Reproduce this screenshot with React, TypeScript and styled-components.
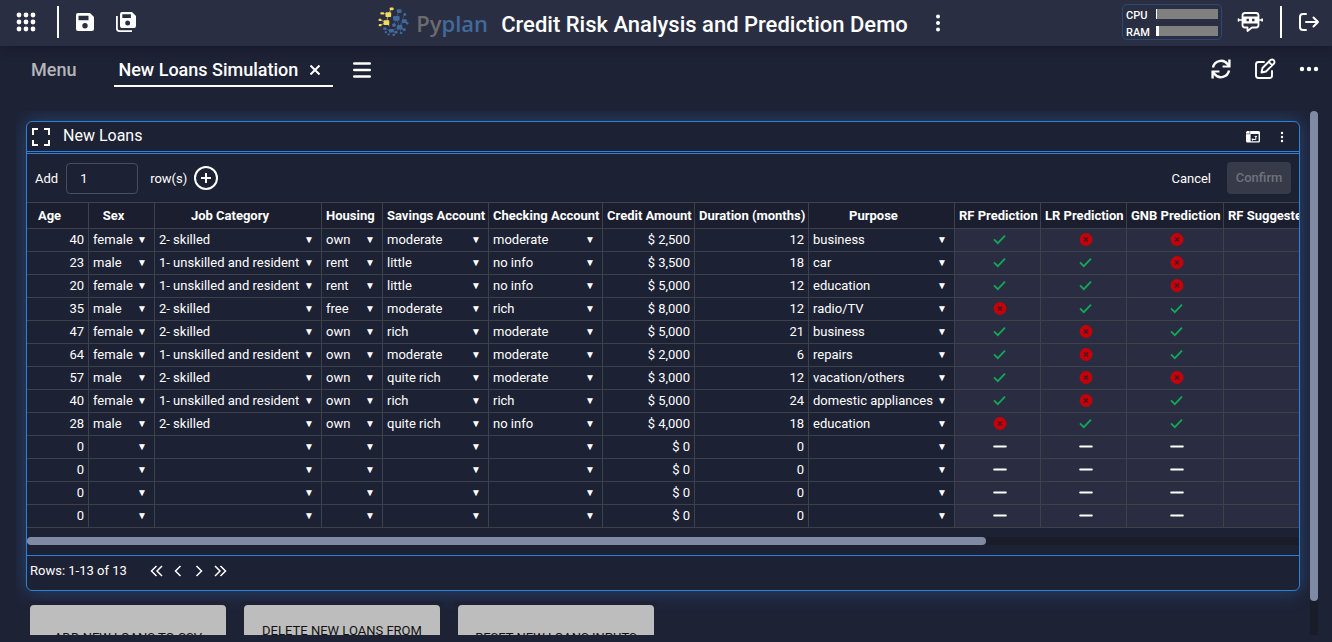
import React from "react";
import styled, { createGlobalStyle } from "styled-components";

const GlobalStyle = createGlobalStyle`
  *, *::before, *::after { box-sizing: border-box; }
  body {
    margin: 0;
    background: #1e2235;
    color: #fff;
    font-family: Roboto, "Liberation Sans", sans-serif;
    font-size: 13px;
  }
  button, input, select { font: inherit; color: inherit; }
`;

const Page = styled.div`
  display: flex;
  flex-direction: column;
  height: 100vh;
  overflow: hidden;
`;

const TopBar = styled.header`
  position: relative;
  display: grid;
  grid-template-columns: 1fr auto 1fr;
  align-items: center;
  height: 46px;
  flex: none;
  background: #2a2e42;
  box-shadow: 0 2px 12px rgba(15, 15, 25, 0.45);
`;

const BarGroup = styled.div<{ $end?: boolean }>`
  display: flex;
  align-items: center;
  align-self: start;
  height: 44px;
  padding: ${(p) => (p.$end ? "0 7px 0 0" : "0 0 0 10px")};
  justify-content: ${(p) => (p.$end ? "flex-end" : "flex-start")};
`;

const IconButton = styled.button<{ $w?: number; $h?: number }>`
  display: flex;
  align-items: center;
  justify-content: center;
  flex: none;
  width: ${(p) => p.$w ?? 32}px;
  height: ${(p) => p.$h ?? 32}px;
  padding: 0;
  border: 0;
  background: none;
  cursor: pointer;

  svg { display: block; }
`;

const Divider = styled.span<{ $gap: string }>`
  width: 2px;
  height: 32px;
  margin: ${(p) => p.$gap};
  background: #fff;
`;

const Brand = styled.div`
  display: flex;
  align-items: center;
`;

const Logo = styled.div`
  display: flex;
  align-items: center;
  gap: 6px;
  width: 123px;
`;

const Wordmark = styled.span`
  font-family: "Open Sans", "Noto Sans", sans-serif;
  font-size: 22px;
  font-weight: 600;
  line-height: 32px;
  color: #416a9c;

  span { color: #6b6b6e; }
`;

const Title = styled.h1`
  margin: 0 14px 0 0;
  padding-top: 4px;
  font-size: 22px;
  font-weight: 500;
  line-height: 28px;
  white-space: nowrap;
`;

const Meters = styled.div`
  display: grid;
  grid-template-columns: 30px 62px;
  align-items: center;
  width: 100px;
  height: 36px;
  margin-right: 12px;
  padding-left: 3px;
  border: 1px solid #2b4a72;
  border-radius: 5px;
  font-size: 11px;
  font-weight: 500;

  span { padding-top: 3px; }
`;

const Meter = styled.div`
  height: 10px;
  background: #808080;
`;

const MeterFill = styled.div`
  height: 100%;
  background: #fff;
`;

const TabBar = styled.nav`
  display: flex;
  align-items: center;
  flex: none;
  height: 48px;
  padding: 0 12px 0 31px;
`;

const Tab = styled.a<{ $active?: boolean }>`
  display: flex;
  align-items: center;
  gap: 12px;
  height: 34px;
  padding: ${(p) => (p.$active ? "2px 13px 0 4px" : "2px 0 2px")};
  margin-right: ${(p) => (p.$active ? 16 : 38)}px;
  border-bottom: ${(p) => (p.$active ? "2px solid #fff" : "0")};
  color: ${(p) => (p.$active ? "#fff" : "#b4b5ba")};
  font-size: 18px;
  font-weight: 500;
  line-height: 30px;
  text-decoration: none;
`;

const TabActions = styled.div`
  display: flex;
  gap: 12px;
  margin: 0 -5px 2px auto;
`;

const Workspace = styled.main`
  display: flex;
  flex: 1;
  min-height: 0;
  margin: 17px 14px 7px 16px;
`;

const Canvas = styled.div`
  flex: 1;
  min-width: 0;
  padding: 10px;
  overflow: hidden;
`;

const Track = styled.div<{ $vertical?: boolean }>`
  flex: none;
  width: ${(p) => (p.$vertical ? "8px" : "100%")};
  height: ${(p) => (p.$vertical ? "100%" : "8px")};
  background: #1a1d29;
`;

const Thumb = styled.div<{ $vertical?: boolean; $size: number }>`
  width: ${(p) => (p.$vertical ? "100%" : p.$size + "%")};
  height: ${(p) => (p.$vertical ? p.$size + "%" : "100%")};
  border-radius: 4px;
  background: #808ba3;
`;

const Panel = styled.section`
  border: 1px solid #2f80d8;
  border-radius: 6px;
  background: #1d2134;
  box-shadow: 0 0 20px rgba(47, 128, 216, 0.4);
`;

const PanelHead = styled.header`
  display: flex;
  align-items: center;
  height: 32px;
  padding: 0 2px 0 4px;
  border-bottom: 3px double #2f80d8;
`;

const PanelTitle = styled.h2`
  flex: 1;
  margin: 0 0 2px 12px;
  font-size: 16px;
  font-weight: 400;
  line-height: 24px;
`;

const Toolbar = styled.form`
  display: flex;
  align-items: center;
  height: 48px;
  padding: 0 8px;
`;

const RowCount = styled.label`
  display: flex;
  align-items: center;

  input {
    width: 72px;
    height: 31px;
    margin: 0 12px 0 8px;
    padding: 0 13px;
    border: 1px solid #4a4d5c;
    border-radius: 4px;
    background: transparent;
  }
`;

const TextButton = styled.button<{ $filled?: boolean }>`
  height: 32px;
  padding: ${(p) => (p.$filled ? "0 0 2px" : "0")};
  border: 0;
  border-radius: 4px;
  width: ${(p) => (p.$filled ? "64px" : "auto")};
  margin-left: ${(p) => (p.$filled ? "16px" : "auto")};
  background: ${(p) => (p.$filled ? "#373b49" : "none")};
  color: ${(p) => (p.$filled ? "#6f727d" : "#fff")};
  font-weight: ${(p) => (p.$filled ? 500 : 400)};
`;

const TableView = styled.div`
  overflow: hidden;
`;

const DataTable = styled.table`
  table-layout: fixed;
  width: 1687px;
  border-collapse: separate;
  border-spacing: 0;
  border-top: 1px solid #3e404a;
`;

const HeadCell = styled.th`
  height: 26px;
  padding: 0 20px 0 4px;
  border-right: 1px solid #3e404a;
  border-bottom: 1px solid #3e404a;
  background: #1b1e2e;
  font-weight: 700;
  line-height: 16px;
  text-align: center;
  white-space: nowrap;
`;

const Cell = styled.td<{ $kind: "number" | "choice" | "mark" }>`
  height: 23px;
  padding: ${(p) => (p.$kind === "mark" ? "0 0 0 4px" : "0 4px")};
  border-right: 1px solid #3e404a;
  border-bottom: 1px solid #3e404a;
  background: ${(p) => (p.$kind === "mark" ? "#2a2d41" : "transparent")};
  line-height: 16px;
  text-align: right;
  white-space: nowrap;

  svg { display: block; margin: 0 auto; }
`;

const Choice = styled.div`
  display: flex;
  align-items: center;
  height: 22px;
  padding-right: 3px;

  select {
    flex: 1;
    min-width: 0;
    height: 22px;
    padding: 0;
    border: 0;
    background: transparent;
    appearance: none;
    outline: none;
  }

  span {
    flex: none;
    font-size: 10px;
    line-height: 16px;
  }
`;

const ScrollRow = styled.div`
  padding: 9px 0 10px;
  border-bottom: 1px solid #2f80d8;
`;

const PanelFoot = styled.footer`
  display: flex;
  align-items: center;
  height: 34px;
  padding: 0 3px 4px;
`;

const PageInfo = styled.span`
  padding-bottom: 2px;
`;

const Pager = styled.div`
  display: flex;
  gap: 1px;
  margin-left: 20px;
`;

const Actions = styled.div`
  display: flex;
  gap: 10px;
  margin-top: 10px;
`;

const ActionTile = styled.div`
  position: relative;
  width: 204px;
  padding: 4px;
  border-radius: 5px;
  background: #1e2235;
`;

const ActionButton = styled.button`
  display: block;
  width: 100%;
  height: 64px;
  padding: 0 16px;
  border: 0;
  border-radius: 4px;
  background: #bdbdbd;
  color: #111;
  font-size: 13px;
  line-height: 13px;
`;

const AppsIcon = () => (
  <svg width="20" height="20" viewBox="0 0 20 20" fill="#fff">
    {[3, 10, 17].map((y) => [3, 10, 17].map((x) => <circle key={x + "-" + y} cx={x} cy={y} r="2.4" />))}
  </svg>
);

const SaveIcon = () => (
  <svg width="18" height="18" viewBox="0 0 18 18">
    <path fill="#fff" fillRule="evenodd" d="M2 0h12l4 4v12a2 2 0 0 1-2 2H2a2 2 0 0 1-2-2V2a2 2 0 0 1 2-2zM2.5 2.8v4.4h10V2.8zM9 10a2.7 2.7 0 1 0 0 5.4A2.7 2.7 0 0 0 9 10z" />
  </svg>
);

const SaveAllIcon = () => (
  <svg width="20" height="20" viewBox="0 0 20 20">
    <path fill="#fff" fillRule="evenodd" d="M6 0h10l4 4v10a2 2 0 0 1-2 2H6a2 2 0 0 1-2-2V2a2 2 0 0 1 2-2zM6.3 2.3v3.6h8.6V2.3zM11.7 8.6a2.5 2.5 0 1 0 0 5 2.5 2.5 0 0 0 0-5z" />
    <path fill="none" stroke="#fff" strokeWidth="1.8" d="M.9 4v12.6q0 2.5 2.5 2.5H16" />
  </svg>
);

const LOGO_YELLOW = [[17.5, 5, 4, 3], [7.5, 10, 4, 2.6], [13, 10, 6, 5], [5.6, 17, 3, 2.5], [11, 18.5, 6, 5], [5.8, 22.5, 3, 2.4]];
const LOGO_BLUE = [[25, 7, 5, 4], [32, 11, 3, 3], [21, 14, 7, 5], [30.5, 17.5, 5, 4], [34.5, 20.5, 3, 2.6], [20, 22, 4, 3.4], [25, 23.5, 6, 5], [10.5, 26, 3.4, 3], [16.5, 28, 5.4, 3.6], [12, 30, 2.6, 2.4], [31, 27, 3.6, 3], [22, 30, 4, 2.6], [28, 31, 3, 2.4], [15, 32.6, 2.6, 2], [20.2, 33, 3, 2.4]];

const LogoMark = () => (
  <svg width="32" height="32" viewBox="5 5 34 33">
    <path stroke="#c9b85a" strokeWidth=".8" fill="none" d="M19 6.5 16 12l-2 9-7-3M9 11l7 1.5M7 24l7-3 3 4" />
    <path stroke="#416a9c" strokeWidth=".6" fill="none" d="m27 9-2.5 7.5 3.5 9.5M24.5 16.5l-2.5 7M33 12.5l-5 13.5 4.5-6.5 3.5 2M12 27.5l7 2.5 9-4M19 30l-3 4M24 31l4-5 4.5 2.5M29.5 32l-1.5-6" />
    {LOGO_YELLOW.map(([x, y, w, h]) => <rect key={x} x={x} y={y} width={w} height={h} rx=".8" fill="#f2da5c" />)}
    {LOGO_BLUE.map(([x, y, w, h]) => <rect key={x} x={x} y={y} width={w} height={h} rx="1.2" fill="#416a9c" />)}
  </svg>
);

const DotsIcon = ({ r, step, across }: { r: number; step: number; across?: boolean }) => (
  <svg width="20" height="20" viewBox="-10 -10 20 20" fill="#fff">
    {[-step, 0, step].map((d) => <circle key={d} cx={across ? d : 0} cy={across ? 0 : d} r={r} />)}
  </svg>
);

const BotIcon = () => (
  <svg width="26" height="22" viewBox="0 0 26 22">
    <path fill="none" stroke="#fff" strokeWidth="1.8" strokeLinejoin="round" d="M8 2h11q2.500 0 2.500 2.500V14q0 2.500-2.500 2.500h-4l-4.500 3.500v-3.500H8q-2.500 0-2.500-2.500V4.500Q5.500 2 8 2z" />
    <path stroke="#fff" strokeWidth="1.6" strokeLinecap="round" d="M1.500 9h3M22.500 9h3M1.500 8v2M25.100 8v2" />
    <path fill="#fff" fillRule="evenodd" d="M6 5.500h15v7H6zM9.500 7.800v2.400h2.400V7.800zM15.100 7.800v2.400h2.400V7.800z" />
  </svg>
);

const ExitIcon = () => (
  <svg width="22" height="20" viewBox="0 0 22 20" fill="none" stroke="#fff" strokeWidth="2" strokeLinecap="round" strokeLinejoin="round">
    <path d="M8 2H5Q2 2 2 5v10q0 3 3 3h3M8 10h12M15.5 5.5 20 10l-4.5 4.5" />
  </svg>
);

const CloseIcon = () => (
  <svg width="10" height="10" viewBox="0 0 10 10" stroke="#fff" strokeWidth="2">
    <path d="m.5.5 9 9M9.5.5l-9 9" />
  </svg>
);

const MenuIcon = () => (
  <svg width="18" height="16" viewBox="0 0 18 16" stroke="#fff" strokeWidth="2.4" strokeLinecap="round">
    <path d="M1.200 1.500h15.600M1.200 8h15.600M1.200 14.500h15.600" />
  </svg>
);

const RefreshIcon = () => (
  <svg width="20" height="20" viewBox="0 0 20 20" fill="none" stroke="#fff" strokeWidth="2.4">
    <path d="M2 8.500A8.200 8.200 0 0 1 16.500 5L18 7M18 11.500A8.200 8.200 0 0 1 3.500 15L2 13" />
    <path fill="#fff" stroke="none" d="M19.600.6v8h-8v-2.200h5.600V.6zM.4 19.400v-8h8v2.200H2.800v5.800z" />
  </svg>
);

const EditIcon = () => (
  <svg width="22" height="22" viewBox="0 0 22 22" fill="none" stroke="#fff" strokeWidth="1.9" strokeLinecap="round" strokeLinejoin="round">
    <path d="M10 4H4.500Q2 4 2 6.500v11Q2 20 4.500 20h11q2.500 0 2.500-2.500V13" />
    <path d="M7.500 14.500 8.500 10l8-8q1.800-1.200 3.200.2t.3 3.300l-8 8zM14.800 3.800l3.500 3.500" />
  </svg>
);

const ExpandIcon = () => (
  <svg width="20" height="20" viewBox="0 0 20 20" fill="none" stroke="#fff" strokeWidth="2">
    <path d="M2 8V2h5M13 2h5v6M18 13v5h-5M7 18H2v-5" />
  </svg>
);

const PivotIcon = () => (
  <svg width="14" height="12" viewBox="0 0 14 12">
    <path fill="#fff" fillRule="evenodd" d="M1.500 0h11Q14 0 14 1.500v8.500q0 1.500-1.500 1.500h-11Q0 11.500 0 10V1.500Q0 0 1.500 0zM4.600 3v7.300h8V3z" />
    <path stroke="#1d2134" strokeWidth=".5" d="M3.800 0v2.800M0 2.900h4" />
    <path fill="none" stroke="#fff" d="M6 8.500h3.800V5M7 7.400 5.900 8.500 7 9.600M8.700 6l1.100-1.100L10.900 6" />
  </svg>
);

const AddIcon = () => (
  <svg width="24" height="24" viewBox="0 0 24 24" fill="none" stroke="#fff" strokeWidth="2">
    <circle cx="12" cy="12" r="11" />
    <path d="M12 7v10M7 12h10" />
  </svg>
);

const PagerIcon = ({ back, double }: { back?: boolean; double?: boolean }) => (
  <svg width="14" height="12" viewBox="0 0 14 12" fill="none" stroke="#fff" strokeWidth="1.5">
    <g transform={back ? "matrix(-1 0 0 1 14 0)" : undefined}>
      <path d={double ? "m2 1 5 5-5 5M7.500 1l5 5-5 5" : "m4.500 1 5 5-5 5"} />
    </g>
  </svg>
);

type Mark = "y" | "n" | "-";

const MarkIcon = ({ mark }: { mark: Mark }) => (
  <svg width="14" height="14" viewBox="0 0 14 14" fill="none" role="img" aria-label={mark === "y" ? "Yes" : mark === "n" ? "No" : "None"}>
    {mark === "y" && <path stroke="#0fa958" strokeWidth="1.8" d="M1 6.300l3.800 3.800L12 2.700" />}
    {mark === "n" && (
      <>
        <circle cx="7" cy="6.500" r="6.400" fill="#c60008" />
        <path stroke="#4a1626" strokeWidth="1.500" d="m5 4.500 4 4M9 4.500l-4 4" />
      </>
    )}
    {mark === "-" && <path stroke="#fff" strokeWidth="2" strokeLinecap="round" d="M1.200 6.500h11.600" />}
  </svg>
);

const COLUMNS: { name: string; width: number }[] = [
  { name: "Age", width: 62 },
  { name: "Sex", width: 66 },
  { name: "Job Category", width: 167 },
  { name: "Housing", width: 61 },
  { name: "Savings Account", width: 106 },
  { name: "Checking Account", width: 114 },
  { name: "Credit Amount", width: 92 },
  { name: "Duration (months)", width: 114 },
  { name: "Purpose", width: 146 },
  { name: "RF Prediction", width: 86 },
  { name: "LR Prediction", width: 86 },
  { name: "GNB Prediction", width: 97 },
  { name: "RF Suggested Amount", width: 140 },
];

const OPTIONS: Record<number, string[]> = {
  1: ["", "female", "male"],
  2: ["", "1- unskilled and resident", "2- skilled"],
  3: ["", "own", "rent", "free"],
  4: ["", "little", "moderate", "quite rich", "rich"],
  5: ["", "no info", "moderate", "rich"],
  8: ["", "business", "car", "domestic appliances", "education", "radio/TV", "repairs", "vacation/others"],
};

const UNSKILLED = "1- unskilled and resident";
const SKILLED = "2- skilled";
const EMPTY = ["0", "", "", "", "", "", "$ 0", "0", "", "-", "-", "-", ""];

const ROWS: string[][] = [
  ["40", "female", SKILLED, "own", "moderate", "moderate", "$ 2,500", "12", "business", "y", "n", "n", ""],
  ["23", "male", UNSKILLED, "rent", "little", "no info", "$ 3,500", "18", "car", "y", "y", "n", ""],
  ["20", "female", UNSKILLED, "rent", "little", "no info", "$ 5,000", "12", "education", "y", "y", "n", ""],
  ["35", "male", SKILLED, "free", "moderate", "rich", "$ 8,000", "12", "radio/TV", "n", "y", "y", ""],
  ["47", "female", SKILLED, "own", "rich", "moderate", "$ 5,000", "21", "business", "y", "n", "y", ""],
  ["64", "female", UNSKILLED, "own", "moderate", "moderate", "$ 2,000", "6", "repairs", "y", "n", "y", ""],
  ["57", "male", SKILLED, "own", "quite rich", "moderate", "$ 3,000", "12", "vacation/others", "y", "n", "n", ""],
  ["40", "female", UNSKILLED, "own", "rich", "rich", "$ 5,000", "24", "domestic appliances", "y", "n", "y", ""],
  ["28", "male", SKILLED, "own", "quite rich", "no info", "$ 4,000", "18", "education", "n", "y", "y", ""],
  EMPTY,
  EMPTY,
  EMPTY,
  EMPTY,
];

const LoanCell = ({ col, row, value }: { col: number; row: number; value: string }) => {
  if (OPTIONS[col]) {
    return (
      <Cell $kind="choice">
        <Choice>
          <select defaultValue={value} aria-label={`${COLUMNS[col].name}, row ${row + 1}`}>
            {OPTIONS[col].map((o) => <option key={o}>{o}</option>)}
          </select>
          <span aria-hidden="true">▼</span>
        </Choice>
      </Cell>
    );
  }
  if (col >= 9) return <Cell $kind="mark">{value && <MarkIcon mark={value as Mark} />}</Cell>;
  return <Cell $kind="number">{value}</Cell>;
};

const LoansPanel = () => (
  <Panel>
    <PanelHead>
      <IconButton $w={20} $h={20} aria-label="Full screen"><ExpandIcon /></IconButton>
      <PanelTitle>New Loans</PanelTitle>
      <IconButton $w={28} $h={28} aria-label="Pivot"><PivotIcon /></IconButton>
      <IconButton $w={30} $h={28} aria-label="Panel options"><DotsIcon r={1.2} step={4} /></IconButton>
    </PanelHead>
    <Toolbar onSubmit={(e) => e.preventDefault()}>
      <RowCount>
        Add
        <input type="text" inputMode="numeric" defaultValue="1" />
        row(s)
      </RowCount>
      <IconButton $w={38} type="button" aria-label="Add rows"><AddIcon /></IconButton>
      <TextButton type="button">Cancel</TextButton>
      <TextButton type="submit" $filled disabled>Confirm</TextButton>
    </Toolbar>
    <TableView>
      <DataTable>
        <colgroup>
          {COLUMNS.map((c) => <col key={c.name} width={c.width} />)}
          <col />
        </colgroup>
        <thead>
          <tr>
            {COLUMNS.map((c) => <HeadCell key={c.name} scope="col">{c.name}</HeadCell>)}
          </tr>
        </thead>
        <tbody>
          {ROWS.map((r, i) => (
            <tr key={i}>
              {r.map((v, c) => <LoanCell key={c} col={c} row={i} value={v} />)}
            </tr>
          ))}
        </tbody>
      </DataTable>
    </TableView>
    <ScrollRow>
      <Track><Thumb $size={75.4} /></Track>
    </ScrollRow>
    <PanelFoot>
      <PageInfo>Rows: 1-13 of 13</PageInfo>
      <Pager>
        <IconButton $w={20} $h={20} aria-label="First page"><PagerIcon back double /></IconButton>
        <IconButton $w={20} $h={20} aria-label="Previous page"><PagerIcon back /></IconButton>
        <IconButton $w={20} $h={20} aria-label="Next page"><PagerIcon /></IconButton>
        <IconButton $w={20} $h={20} aria-label="Last page"><PagerIcon double /></IconButton>
      </Pager>
    </PanelFoot>
  </Panel>
);

export default function App() {
  return (
    <Page>
      <GlobalStyle />
      <TopBar>
        <BarGroup>
          <IconButton aria-label="Applications"><AppsIcon /></IconButton>
          <Divider $gap="0 10px 0 15px" />
          <IconButton aria-label="Save"><SaveIcon /></IconButton>
          <IconButton $w={50} aria-label="Save all"><SaveAllIcon /></IconButton>
        </BarGroup>
        <Brand>
          <Logo>
            <LogoMark />
            <Wordmark><span>Py</span>plan</Wordmark>
          </Logo>
          <Title>Credit Risk Analysis and Prediction Demo</Title>
          <IconButton aria-label="Application options"><DotsIcon r={2} step={6.5} /></IconButton>
        </Brand>
        <BarGroup $end>
          <Meters>
            <span>CPU</span>
            <Meter><MeterFill style={{ width: "2%" }} /></Meter>
            <span>RAM</span>
            <Meter><MeterFill style={{ width: "5%" }} /></Meter>
          </Meters>
          <IconButton aria-label="Assistant"><BotIcon /></IconButton>
          <Divider $gap="0 11px 0 14px" />
          <IconButton aria-label="Exit"><ExitIcon /></IconButton>
        </BarGroup>
      </TopBar>
      <TabBar>
        <Tab href="#menu">Menu</Tab>
        <Tab href="#simulation" $active>
          New Loans Simulation
          <CloseIcon />
        </Tab>
        <IconButton $w={26} aria-label="Tab list"><MenuIcon /></IconButton>
        <TabActions>
          <IconButton aria-label="Refresh"><RefreshIcon /></IconButton>
          <IconButton aria-label="Edit"><EditIcon /></IconButton>
          <IconButton aria-label="More"><DotsIcon r={2.2} step={7} across /></IconButton>
        </TabActions>
      </TabBar>
      <Workspace>
        <Canvas>
          <LoansPanel />
          <Actions>
            <ActionTile><ActionButton>ADD NEW LOANS TO CSV</ActionButton></ActionTile>
            <ActionTile><ActionButton>DELETE NEW LOANS FROM CSV</ActionButton></ActionTile>
            <ActionTile><ActionButton>RESET NEW LOANS INPUTS</ActionButton></ActionTile>
          </Actions>
        </Canvas>
        <Track $vertical><Thumb $vertical $size={93.5} /></Track>
      </Workspace>
    </Page>
  );
}
